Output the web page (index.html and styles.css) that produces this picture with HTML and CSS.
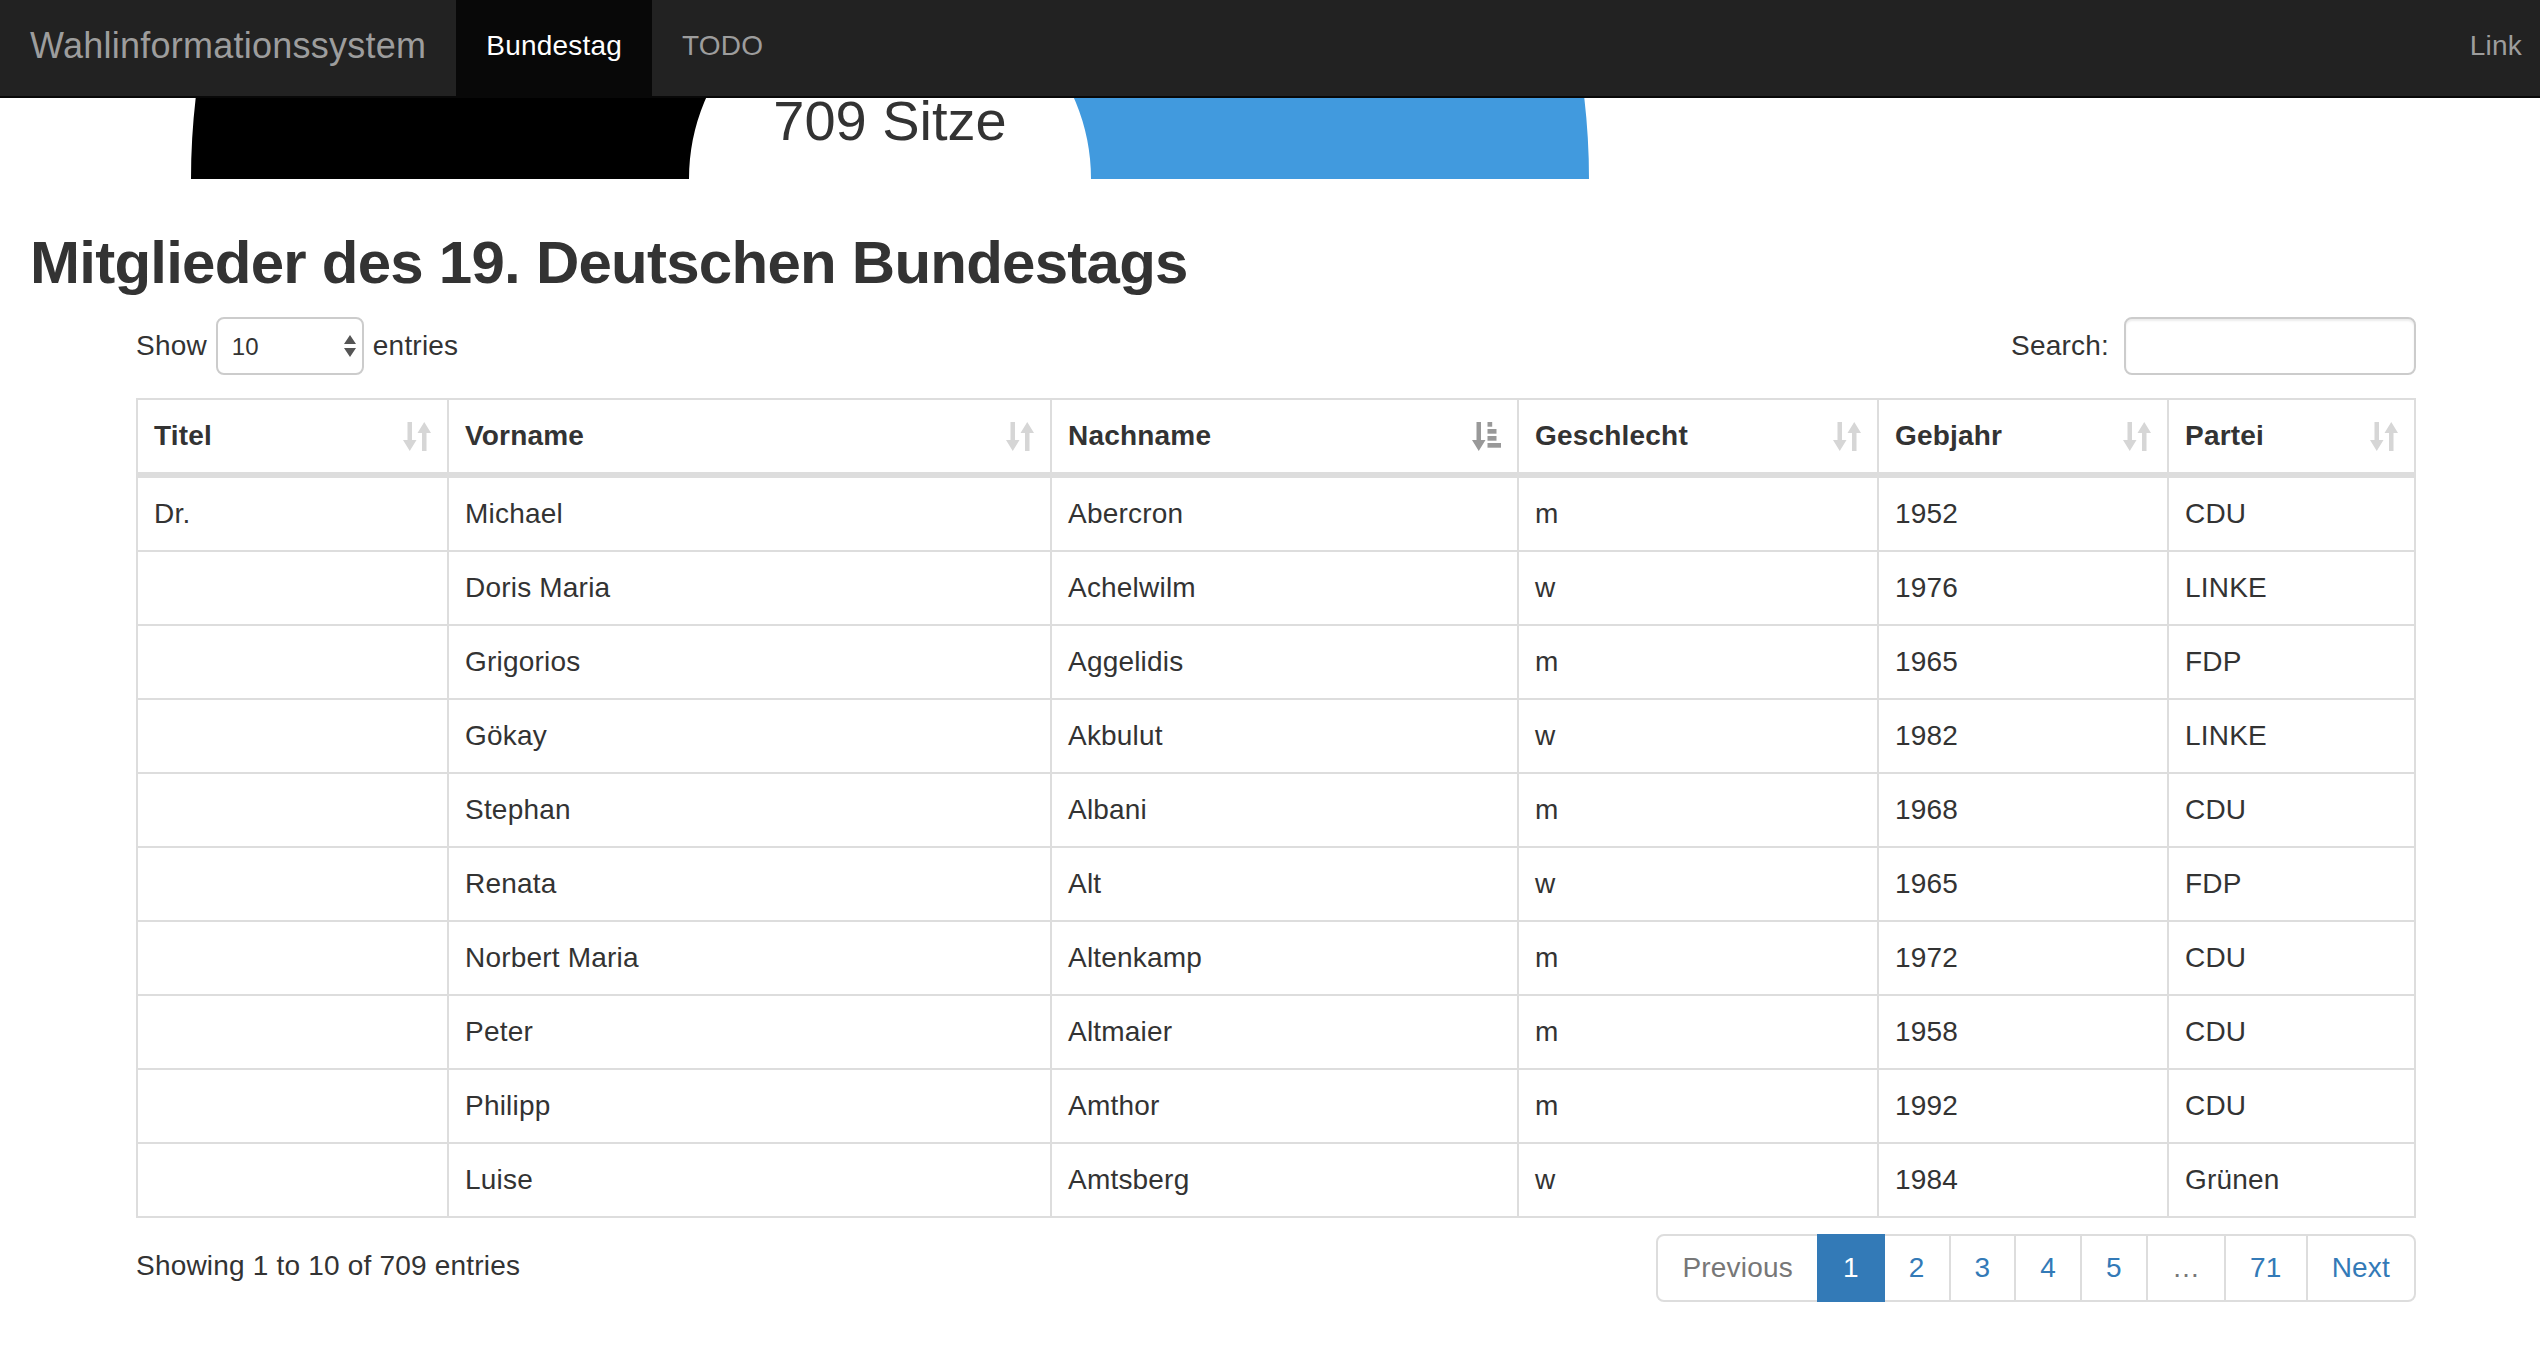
FILE: index.html
```html
<!DOCTYPE html>
<html lang="de">
<head>
<meta charset="utf-8">
<title>Wahlinformationssystem</title>
<link rel="stylesheet" href="styles.css">
</head>
<body>
<div class="page">
  <nav class="navbar">
    <a class="brand" href="#">Wahlinformationssystem</a>
    <ul class="nav">
      <li class="active"><a href="#">Bundestag</a></li>
      <li><a href="#">TODO</a></li>
    </ul>
    <ul class="nav nav-right">
      <li><a href="#">Link</a></li>
    </ul>
  </nav>

  <div class="chart">
    <svg class="chart-svg" width="2552" height="81" viewBox="0 98 2552 81">
      <path fill="#000000" d="M191 179 A699 699 0 0 1 395.7 -315.3 L747.9 36.9 A201 201 0 0 0 689 179 Z"/>
      <path fill="#419ade" d="M1589 179 A699 699 0 0 0 1384.3 -315.3 L1032.1 36.9 A201 201 0 0 1 1091 179 Z"/>
      <text x="890" y="140" text-anchor="middle" class="chart-label">709 Sitze</text>
    </svg>
  </div>

  <div class="container-fluid">
    <h2 class="title">Mitglieder des 19. Deutschen Bundestags</h2>
  </div>

  <div class="container">
    <div class="dt-top">
      <label class="dt-length">Show
        <span class="select">
          <select><option>10</option><option>25</option><option>50</option><option>100</option></select>
          <svg class="select-arrows" width="12" height="22" viewBox="0 0 12 22"><path d="M0 9 L6 0 L12 9 Z M0 13 L12 13 L6 22 Z"/></svg>
        </span>
        entries</label>
      <label class="dt-filter">Search: <input type="search"></label>
    </div>

    <table class="dt">
      <thead>
        <tr>
          <th class="c1"><div class="th">Titel<svg class="sort" width="28" height="29" viewBox="0 0 28 29"><path d="M4.5 0h4.5v18h4.5L6.75 29L0 18h4.5z"/><path d="M21.25 0L28 11h-4.5v18h-4.5V11h-4.5z"/></svg></div></th>
          <th class="c2"><div class="th">Vorname<svg class="sort" width="28" height="29" viewBox="0 0 28 29"><path d="M4.5 0h4.5v18h4.5L6.75 29L0 18h4.5z"/><path d="M21.25 0L28 11h-4.5v18h-4.5V11h-4.5z"/></svg></div></th>
          <th class="c3"><div class="th">Nachname<svg class="sort sort-asc" width="29" height="29" viewBox="0 0 29 29"><path d="M4.5 0h4.5v18h4.5L6.75 29L0 18h4.5z"/><rect x="15.5" y="0" width="4.7" height="4.7"/><rect x="15.5" y="7" width="9" height="4.7"/><rect x="15.5" y="14" width="9" height="4.7"/><rect x="15.5" y="21" width="13.5" height="4.7"/></svg></div></th>
          <th class="c4"><div class="th">Geschlecht<svg class="sort" width="28" height="29" viewBox="0 0 28 29"><path d="M4.5 0h4.5v18h4.5L6.75 29L0 18h4.5z"/><path d="M21.25 0L28 11h-4.5v18h-4.5V11h-4.5z"/></svg></div></th>
          <th class="c5"><div class="th">Gebjahr<svg class="sort" width="28" height="29" viewBox="0 0 28 29"><path d="M4.5 0h4.5v18h4.5L6.75 29L0 18h4.5z"/><path d="M21.25 0L28 11h-4.5v18h-4.5V11h-4.5z"/></svg></div></th>
          <th class="c6"><div class="th">Partei<svg class="sort" width="28" height="29" viewBox="0 0 28 29"><path d="M4.5 0h4.5v18h4.5L6.75 29L0 18h4.5z"/><path d="M21.25 0L28 11h-4.5v18h-4.5V11h-4.5z"/></svg></div></th>
        </tr>
      </thead>
      <tbody>
        <tr><td>Dr.</td><td>Michael</td><td>Abercron</td><td>m</td><td>1952</td><td>CDU</td></tr>
        <tr><td></td><td>Doris Maria</td><td>Achelwilm</td><td>w</td><td>1976</td><td>LINKE</td></tr>
        <tr><td></td><td>Grigorios</td><td>Aggelidis</td><td>m</td><td>1965</td><td>FDP</td></tr>
        <tr><td></td><td>Gökay</td><td>Akbulut</td><td>w</td><td>1982</td><td>LINKE</td></tr>
        <tr><td></td><td>Stephan</td><td>Albani</td><td>m</td><td>1968</td><td>CDU</td></tr>
        <tr><td></td><td>Renata</td><td>Alt</td><td>w</td><td>1965</td><td>FDP</td></tr>
        <tr><td></td><td>Norbert Maria</td><td>Altenkamp</td><td>m</td><td>1972</td><td>CDU</td></tr>
        <tr><td></td><td>Peter</td><td>Altmaier</td><td>m</td><td>1958</td><td>CDU</td></tr>
        <tr><td></td><td>Philipp</td><td>Amthor</td><td>m</td><td>1992</td><td>CDU</td></tr>
        <tr><td></td><td>Luise</td><td>Amtsberg</td><td>w</td><td>1984</td><td>Grünen</td></tr>
      </tbody>
    </table>

    <div class="dt-bottom">
      <div class="dt-info">Showing 1 to 10 of 709 entries</div>
      <ul class="pagination">
        <li class="disabled"><a href="#">Previous</a></li>
        <li class="active"><a href="#">1</a></li>
        <li><a href="#">2</a></li>
        <li><a href="#">3</a></li>
        <li><a href="#">4</a></li>
        <li><a href="#">5</a></li>
        <li class="disabled"><a href="#">…</a></li>
        <li><a href="#">71</a></li>
        <li><a href="#">Next</a></li>
      </ul>
    </div>
  </div>
</div>
</body>
</html>
```

FILE: styles.css
```css
html {
  overflow: hidden;
}

body {
  margin: 0;
  font-family: "Liberation Sans", Arial, Helvetica, sans-serif;
  font-size: 28px;
  line-height: 40px;
  letter-spacing: 0.2px;
  color: #333;
  background: #fff;
}

.page {
  width: 2552px;
}

/* Navbar */
.navbar {
  display: flex;
  height: 96px;
  background: #222;
  border-bottom: 2px solid #080808;
}

.brand {
  padding: 26px 30px 30px;
  font-size: 36px;
  line-height: 40px;
  letter-spacing: 0.25px;
  color: #9d9d9d;
  text-decoration: none;
}

.nav {
  display: flex;
  list-style: none;
  margin: 0;
  padding: 0;
}

.nav a {
  display: block;
  padding: 26px 30px 30px;
  line-height: 40px;
  color: #9d9d9d;
  text-decoration: none;
}

.nav .active a {
  background: #080808;
  color: #fff;
}

.nav-right {
  margin-left: auto;
}

/* Chart */
.chart {
  height: 81px;
}

.chart-svg {
  display: block;
}

.chart-label {
  font-family: "Liberation Sans", Arial, sans-serif;
  font-size: 56px;
  letter-spacing: 0;
  fill: #333;
}

/* Heading */
.container-fluid {
  padding: 0 30px;
}

.title {
  margin: 51px 0 21px;
  font-size: 60px;
  line-height: 66px;
  font-weight: 700;
  letter-spacing: -0.75px;
  color: #333;
}

.container {
  width: 2280px;
  padding: 0 30px;
  margin: 0 auto;
}

/* DataTable controls */
.dt-top {
  display: flex;
  justify-content: space-between;
  align-items: center;
  height: 58px;
}

.dt-length,
.dt-filter {
  display: flex;
  align-items: center;
  font-weight: 400;
}

.dt-length {
  column-gap: 9px;
}

.dt-filter {
  column-gap: 15px;
}

.select {
  display: inline-flex;
  align-items: center;
  box-sizing: border-box;
  width: 148px;
  height: 58px;
  padding: 0 6px 0 14px;
  border: 2px solid #ccc;
  border-radius: 8px;
  background: #fff;
}

.select select {
  flex: 1;
  appearance: none;
  -webkit-appearance: none;
  border: 0;
  padding: 0;
  background: transparent;
  font-family: "Liberation Sans", Arial, sans-serif;
  font-size: 24px;
  color: #333;
  outline: none;
}

.select-arrows {
  fill: #555;
  display: block;
}

.dt-filter input {
  box-sizing: border-box;
  width: 292px;
  height: 58px;
  border: 2px solid #ccc;
  border-radius: 8px;
  box-shadow: inset 0 2px 2px rgba(0, 0, 0, 0.075);
  font-family: "Liberation Sans", Arial, sans-serif;
  font-size: 24px;
  padding: 0 20px;
  outline: none;
}

/* Table */
.dt {
  box-sizing: border-box;
  width: 2280px;
  table-layout: fixed;
  border-collapse: separate;
  border-spacing: 0;
  border: 2px solid #ddd;
  margin: 23px 0 12px;
}

.dt th,
.dt td {
  box-sizing: border-box;
  padding: 16px;
  line-height: 40px;
  text-align: left;
  vertical-align: top;
  border-right: 2px solid #ddd;
}

.dt th:last-child,
.dt td:last-child {
  border-right: 0;
}

.dt th {
  font-weight: 700;
  border-bottom: 6px solid #ddd;
}

.dt tbody tr + tr td {
  border-top: 2px solid #ddd;
}

.dt .c1 { width: 311px; }
.dt .c2 { width: 603px; }
.dt .c3 { width: 467px; }
.dt .c4 { width: 360px; }
.dt .c5 { width: 290px; }
.dt .c6 { width: 245px; }

.th {
  display: flex;
  justify-content: space-between;
  align-items: center;
}

.sort {
  display: block;
  fill: #d6d6d6;
}

.sort-asc {
  fill: #999;
}

/* Bottom */
.dt-bottom {
  display: flex;
  justify-content: space-between;
  align-items: flex-start;
}

.dt-info {
  padding-top: 16px;
  line-height: 40px;
  white-space: nowrap;
}

.pagination {
  display: flex;
  list-style: none;
  margin: 4px 0;
  padding: 0;
}

.pagination a {
  display: block;
  position: relative;
  padding: 12px 24px;
  line-height: 40px;
  border: 2px solid #ddd;
  margin-left: -2px;
  color: #337ab7;
  background: #fff;
  text-decoration: none;
}

.pagination li:first-child a {
  margin-left: 0;
  border-radius: 8px 0 0 8px;
}

.pagination li:last-child a {
  border-radius: 0 8px 8px 0;
}

.pagination .active a {
  z-index: 2;
  background: #337ab7;
  border-color: #337ab7;
  color: #fff;
}

.pagination .disabled a {
  color: #777;
}
```
